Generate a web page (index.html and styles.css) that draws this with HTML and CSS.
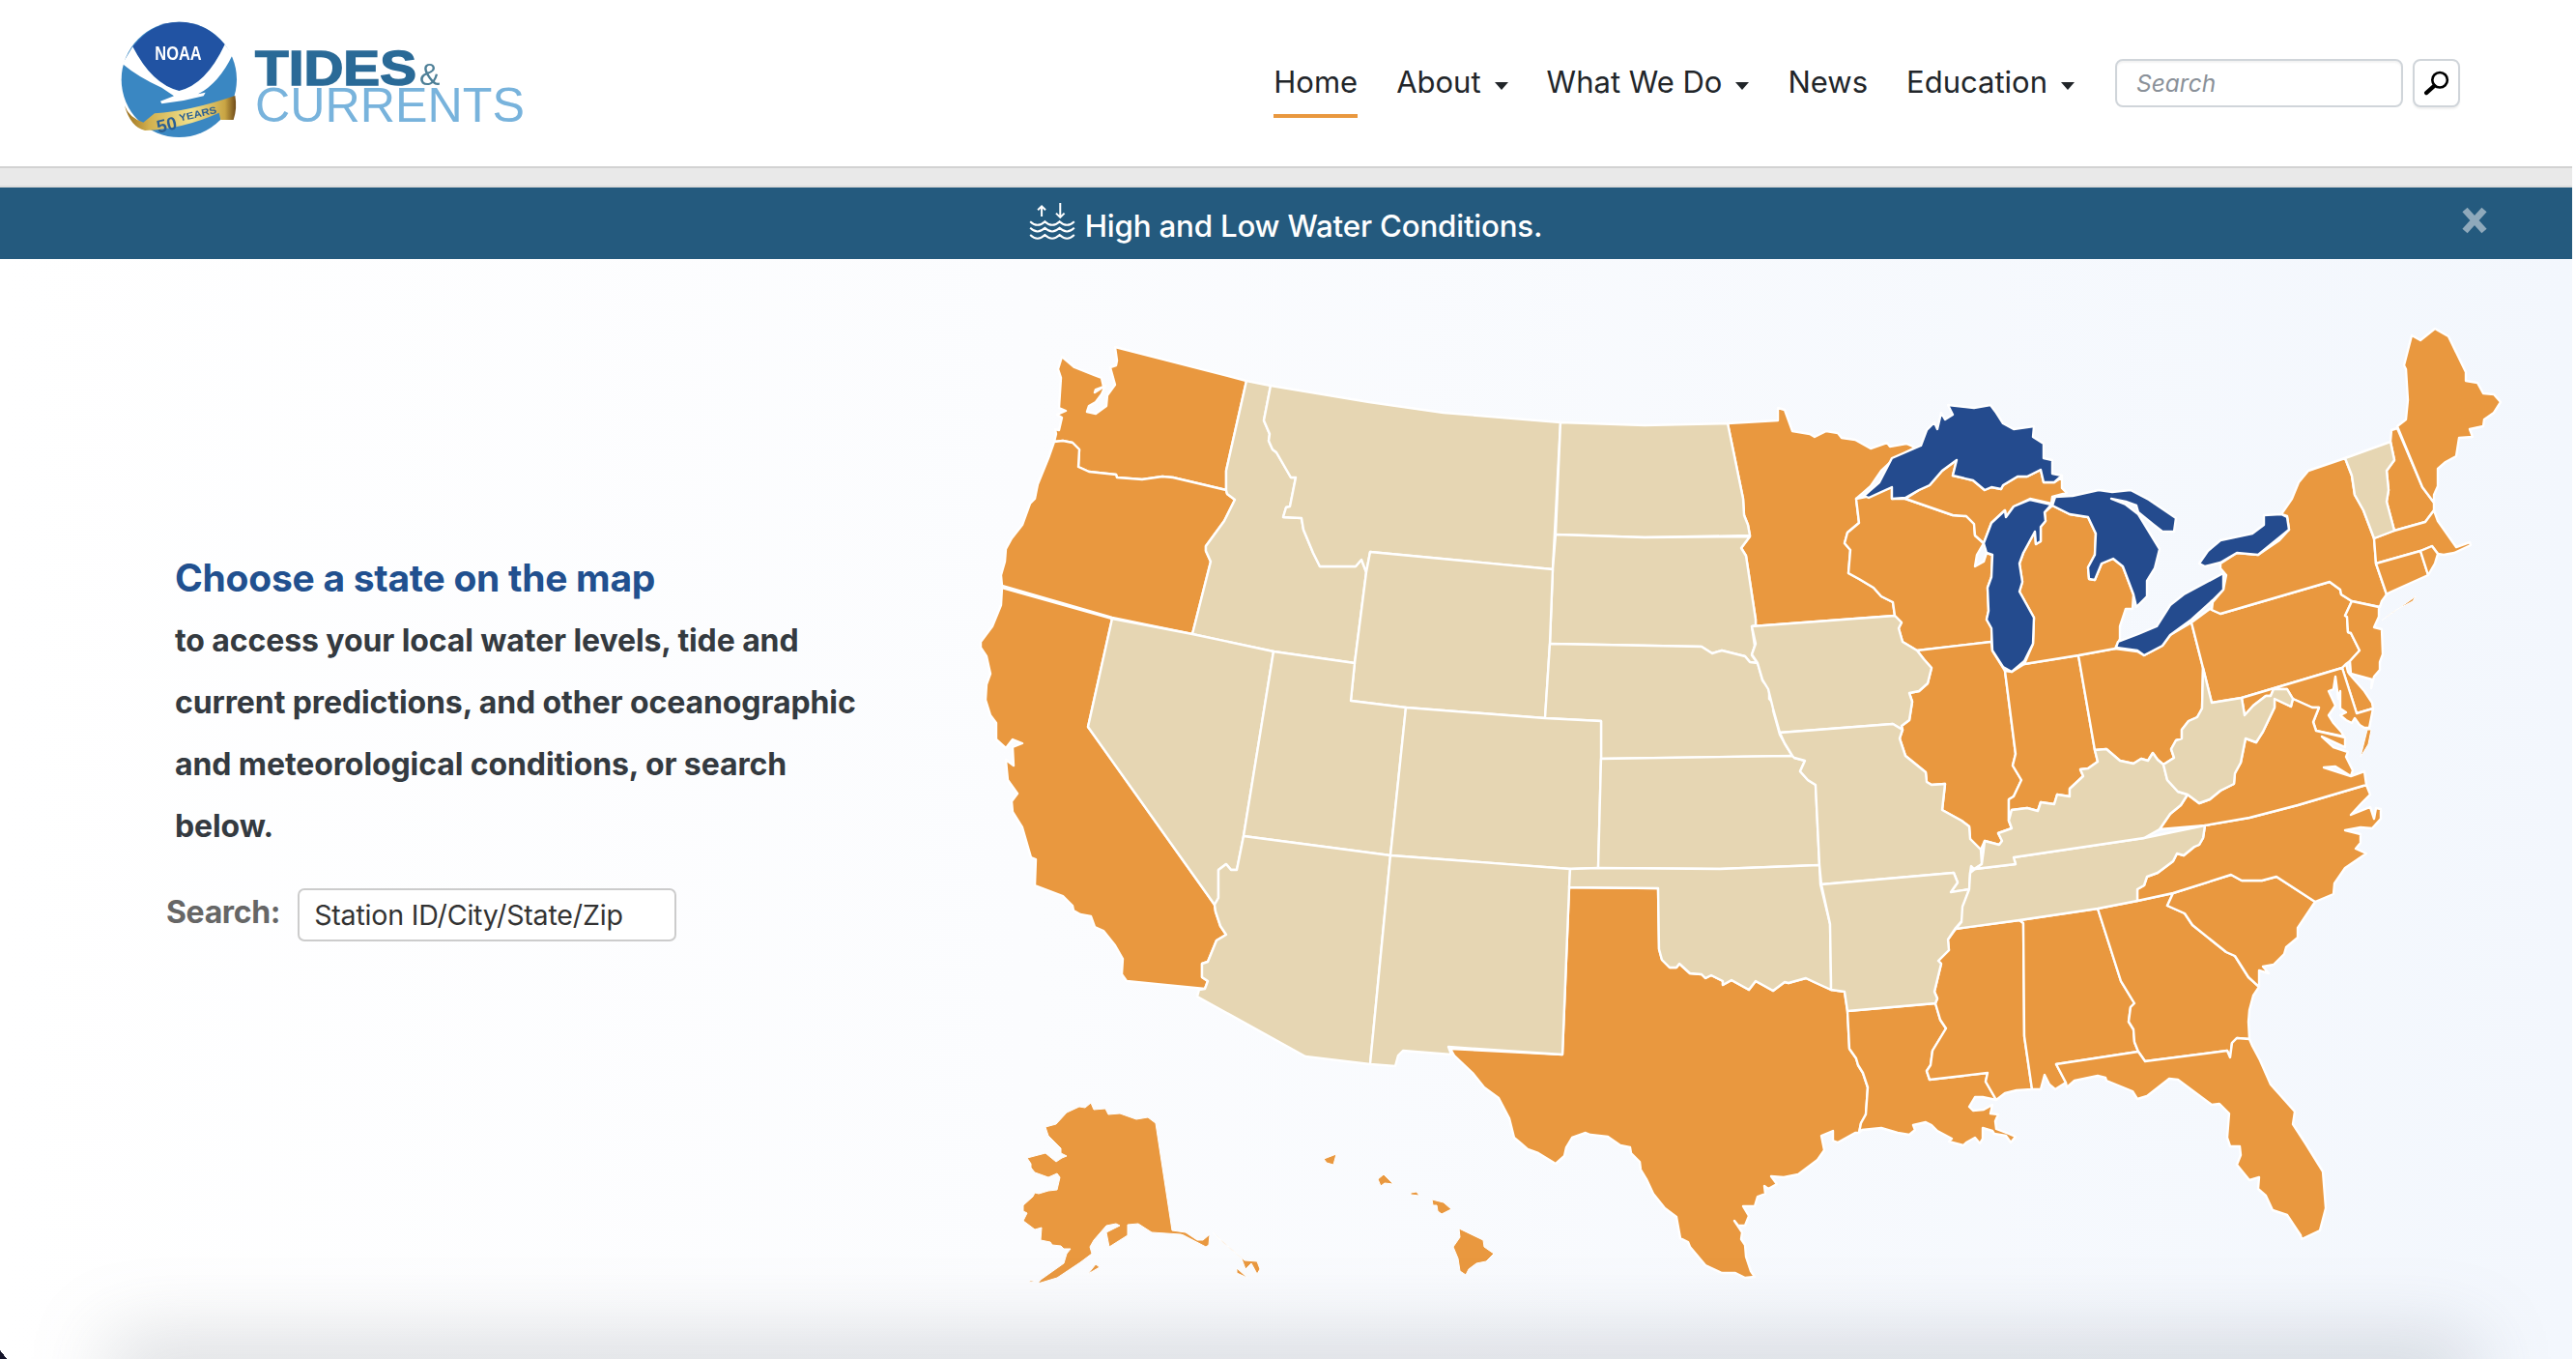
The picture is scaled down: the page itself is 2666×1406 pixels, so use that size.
FILE: index.html
```html
<!DOCTYPE html>
<html lang="en">
<head>
<meta charset="utf-8">
<title>Tides &amp; Currents</title>
<link rel="stylesheet" href="styles.css">
</head>
<body>
<div class="page">
  <header class="topbar">
    <a class="logo" href="#">
      <svg class="logo-art" viewBox="120 20 430 125" width="430" height="125">
        <defs>
          <linearGradient id="gold" x1="0" y1="0" x2="1" y2="0">
            <stop offset="0" stop-color="#9a6f1e"/><stop offset=".22" stop-color="#d2b04e"/>
            <stop offset=".6" stop-color="#f0e08c"/><stop offset=".9" stop-color="#c9a544"/><stop offset="1" stop-color="#6e4a18"/>
          </linearGradient>
        </defs>
        <g transform="translate(80 0) scale(.33333)">
          <circle cx="316" cy="247" r="179" fill="#3a87c2"/>
          <path d="M172 145Q232 68 316 68Q400 68 458 138Q400 262 316 282Q232 262 172 145Z" fill="#2153a3"/>
          <path d="M172 145Q232 262 316 282Q400 262 458 138L482 170Q440 258 375 292L398 287L392 298L330 312L262 322L258 314L300 298L262 272Q190 240 140 198Z" fill="#fff"/>
          <text class="logo-noaa" x="241" y="185" textLength="145" lengthAdjust="spacingAndGlyphs">NOAA</text>
          <path d="M147 328Q160 365 205 380L240 352Q350 345 490 297Q497 335 485 372L445 372L440 350Q330 400 210 405Q165 395 147 328Z" fill="url(#gold)"/>
          <g transform="rotate(-13 340 370)">
            <text class="logo-fifty" x="244" y="392">50</text>
            <text class="logo-years" x="318" y="372" textLength="118" lengthAdjust="spacingAndGlyphs">YEARS</text>
          </g>
        </g>
        <text class="logo-tides" x="264" y="88" textLength="167" lengthAdjust="spacingAndGlyphs">TIDES</text>
        <text class="logo-amp" x="434" y="88">&amp;</text>
        <text class="logo-currents" x="264" y="126" textLength="279" lengthAdjust="spacingAndGlyphs">CURRENTS</text>
      </svg>
    </a>
    <nav class="nav">
      <a class="nav-link active" href="#">Home</a>
      <a class="nav-link caret" href="#">About</a>
      <a class="nav-link caret" href="#">What We Do</a>
      <a class="nav-link" href="#">News</a>
      <a class="nav-link caret" href="#">Education</a>
    </nav>
    <form class="top-search">
      <input class="top-input" type="text" placeholder="Search">
      <button class="top-btn" type="button" aria-label="Search">
        <svg viewBox="85 100 85 80" width="28" height="26">
          <circle cx="137" cy="130" r="24" fill="none" stroke="#000" stroke-width="8"/>
          <path d="M119 149L94 171" stroke="#000" stroke-width="13" stroke-linecap="round"/>
        </svg>
      </button>
    </form>
  </header>
  <div class="stripe"></div>
  <div class="banner">
    <svg class="water" viewBox="70 55 150 130" width="50" height="43">
      <g fill="none" stroke="#fff" stroke-width="6">
        <path d="M112 100V68M100 80L112 68L124 80"/>
        <path d="M170 58V102M157 90L170 103L183 90"/>
        <path d="M76 116q23 22 46 0q23 22 46 0q23 22 46 0"/>
        <path d="M76 136q23 22 46 0q23 22 46 0q23 22 46 0"/>
        <path d="M76 158q23 22 46 0q23 22 46 0q23 22 46 0"/>
      </g>
    </svg>
    <span class="banner-text">High and Low Water Conditions.</span>
    <button class="banner-close" type="button" aria-label="Close">
      <svg viewBox="0 0 26 28" width="26" height="28"><path d="M3 3L23 25M23 3L3 25" stroke="#8fa9bb" stroke-width="7"/></svg>
    </button>
  </div>
  <main class="hero">
    <section class="intro">
      <h1 class="intro-title">Choose a state on the map</h1>
      <p class="intro-text">to access your local water levels, tide and current predictions, and other oceanographic and meteorological conditions, or search below.</p>
      <form class="station-form">
        <label class="station-label" for="station">Search:</label>
        <input class="station-input" id="station" type="text" placeholder="Station ID/City/State/Zip">
      </form>
    </section>
    <svg class="map" viewBox="1000 320 1620 1050" width="1620" height="1050">
      <g class="or">
        <polygon points="1154,359 1290,394 1269,487 1269,507 1214,494 1203,493 1182,496 1156,494 1155,491 1127,488 1116,483 1117,465 1110,458 1100,456 1091,457 1093,449 1092,444 1096,445 1099,432 1094,429 1103,425 1096,422 1098,391 1095,382 1099,369 1112,380 1132,388 1140,391 1142,400 1134,403 1133,406 1144,399 1140,408 1134,416 1127,420 1125,426 1134,428 1145,420 1146,409 1154,398 1149,380 1155,378 1156,373"/>
        <polygon points="1091,457 1100,456 1110,458 1117,465 1116,483 1127,488 1155,491 1156,494 1182,496 1203,493 1214,494 1269,507 1270,511 1278,517 1267,539 1248,565 1248,570 1253,581 1234,656 1151,639 1037,606 1036,595 1040,581 1041,568 1047,557 1058,543 1066,521 1071,516 1074,501 1085,474"/>
        <polygon points="1037,608 1151,640 1126,752 1257,936 1258,943 1263,958 1269,967 1259,973 1250,995 1244,997 1244,1011 1250,1015 1247,1023 1166,1015 1161,1008 1162,992 1154,978 1142,963 1133,959 1129,948 1118,946 1111,942 1110,937 1100,927 1071,916 1072,889 1067,887 1058,856 1048,840 1047,829 1053,821 1043,807 1041,786 1049,792 1048,773 1058,769 1048,765 1041,774 1031,765 1031,748 1025,740 1020,724 1021,708 1025,697 1021,679 1015,670 1015,664 1027,648 1036,626"/>
        <polygon points="1624,918 1716,919 1717,982 1720,993 1728,1001 1735,1001 1738,997 1749,1007 1761,1008 1765,1012 1771,1009 1783,1015 1783,1019 1792,1014 1810,1024 1817,1015 1835,1025 1847,1016 1851,1017 1869,1012 1884,1019 1895,1024 1909,1026 1912,1046 1914,1085 1921,1095 1923,1102 1928,1110 1933,1125 1931,1153 1926,1162 1924,1172 1920,1172 1902,1182 1897,1180 1897,1170 1885,1175 1888,1190 1881,1200 1861,1215 1846,1218 1833,1217 1839,1225 1830,1230 1826,1227 1827,1235 1819,1238 1816,1248 1804,1248 1810,1258 1806,1268 1799,1268 1795,1263 1803,1275 1802,1282 1806,1288 1807,1300 1812,1315 1816,1321 1806,1322 1796,1317 1782,1317 1765,1309 1749,1290 1747,1285 1739,1281 1735,1259 1723,1250 1711,1235 1704,1220 1698,1210 1697,1202 1688,1193 1687,1187 1677,1185 1664,1176 1646,1174 1641,1172 1627,1177 1621,1187 1619,1196 1610,1204 1592,1193 1581,1189 1573,1182 1567,1177 1562,1157 1551,1136 1536,1125 1524,1110 1505,1092 1501,1085 1617,1091"/>
        <polygon points="1788,438 1840,435 1840,422 1847,424 1855,446 1873,449 1878,452 1890,446 1902,448 1906,453 1920,455 1936,464 1953,458 1956,462 1973,459 1982,463 1961,474 1947,487 1936,503 1921,516 1924,541 1912,551 1909,562 1915,569 1913,593 1924,599 1939,608 1947,617 1959,623 1961,637 1813,648 1817,647 1817,641 1807,575 1802,567 1811,555 1811,554 1809,543 1805,533 1804,516 1795,472"/>
        <polygon points="1921,516 1931,514 1958,504 1958,516 1972,516 2021,533 2035,534 2043,542 2044,554 2053,562 2046,574 2044,586 2053,581 2056,572 2062,574 2061,597 2057,608 2058,632 2056,641 2062,651 2061,664 1984,673 1969,664 1965,650 1968,644 1961,637 1959,623 1947,617 1939,608 1924,599 1913,593 1915,569 1909,562 1912,551 1924,541"/>
        <polygon points="1984,673 2061,664 2062,673 2075,694 2086,780 2083,792 2092,807 2084,824 2079,827 2079,849 2082,857 2068,862 2072,870 2069,874 2054,870 2050,879 2039,868 2038,855 2030,849 2010,838 2013,811 1999,812 1994,809 1993,799 1972,782 1966,764 1969,755 1968,751 1976,745 1979,726 1976,717 1986,715 1995,707 1999,691 1991,682"/>
        <polygon points="1912,1046 2003,1038 2008,1055 2014,1064 2000,1087 1998,1102 1994,1108 1997,1117 2057,1110 2055,1119 2066,1138 2052,1135 2044,1135 2038,1145 2042,1149 2053,1148 2062,1143 2060,1152 2068,1153 2065,1160 2066,1168 2079,1173 2086,1176 2081,1182 2076,1175 2064,1173 2062,1170 2052,1167 2052,1178 2049,1183 2044,1177 2035,1182 2032,1185 2017,1181 2020,1178 2005,1170 1999,1164 1993,1161 1980,1164 1982,1169 1976,1174 1964,1172 1947,1167 1927,1169 1924,1172 1926,1162 1931,1153 1933,1125 1928,1110 1923,1102 1921,1095 1914,1085"/>
        <polygon points="2024,961 2090,952 2094,955 2095,1072 2103,1127 2087,1128 2075,1131 2066,1138 2055,1119 2057,1110 1997,1117 1994,1108 1998,1102 2000,1087 2014,1064 2008,1055 2003,1038 2005,1033 2002,1026 2009,997 2006,994 2017,983 2016,972"/>
        <polygon points="2090,952 2171,940 2195,1015 2209,1038 2205,1042 2203,1057 2208,1065 2209,1078 2213,1088 2128,1101 2138,1120 2127,1127 2121,1122 2116,1112 2112,1127 2106,1127 2103,1127 2095,1072 2094,955"/>
        <polygon points="2171,940 2212,932 2249,924 2243,937 2261,945 2269,957 2304,985 2313,989 2327,1011 2338,1021 2332,1030 2328,1045 2327,1057 2328,1075 2315,1074 2310,1079 2308,1094 2305,1087 2220,1098 2213,1088 2209,1078 2208,1065 2203,1057 2205,1042 2209,1038 2195,1015"/>
        <polygon points="2128,1101 2213,1088 2220,1098 2305,1087 2308,1094 2310,1079 2315,1074 2328,1075 2331,1082 2339,1097 2350,1122 2375,1150 2373,1163 2386,1183 2404,1212 2407,1250 2401,1273 2382,1282 2381,1278 2367,1257 2352,1252 2345,1237 2337,1230 2338,1218 2328,1221 2315,1205 2319,1195 2318,1186 2308,1186 2305,1177 2307,1152 2297,1142 2289,1143 2254,1117 2245,1116 2222,1134 2212,1137 2207,1129 2180,1118 2179,1115 2171,1113 2147,1118 2139,1125 2138,1120"/>
        <polygon points="2249,924 2309,905 2320,911 2341,911 2356,907 2396,933 2378,960 2378,970 2366,980 2364,987 2353,998 2342,1000 2348,1007 2338,1004 2338,1021 2327,1011 2313,989 2304,985 2269,957 2261,945 2243,937"/>
        <polygon points="2282,854 2328,846 2378,833 2449,812 2453,822 2445,830 2433,843 2453,835 2457,847 2459,836 2464,837 2464,847 2455,857 2443,856 2427,859 2443,863 2443,872 2438,878 2449,883 2427,898 2416,914 2415,925 2396,933 2356,907 2341,911 2320,911 2309,905 2249,924 2212,932 2212,920 2219,916 2222,907 2233,903 2249,891 2253,883 2260,885 2271,876 2276,874 2280,867"/>
        <polygon points="2075,694 2082,695 2095,687 2151,678 2168,776 2171,788 2161,795 2153,796 2156,803 2142,816 2142,824 2129,822 2126,832 2112,830 2109,839 2098,836 2082,838 2079,849 2079,827 2084,824 2092,807 2083,792 2086,780"/>
        <polygon points="2151,678 2189,671 2212,674 2219,678 2238,668 2246,657 2268,644 2280,691 2279,733 2274,742 2265,746 2258,755 2258,764 2252,766 2247,775 2250,784 2239,791 2233,786 2228,779 2223,787 2216,785 2208,790 2194,787 2180,775 2168,776"/>
        <polygon points="1972,516 1986,507 1997,502 2010,487 2025,476 2021,492 2042,497 2054,507 2061,504 2071,506 2073,502 2088,493 2098,493 2112,486 2115,499 2126,499 2134,494 2134,505 2139,510 2124,514 2123,521 2101,516 2084,524 2076,535 2075,528 2061,541 2053,562 2044,554 2043,542 2035,534 2021,533"/>
        <polygon points="2124,523 2142,532 2161,535 2169,552 2168,574 2161,587 2162,599 2168,600 2175,583 2187,578 2197,586 2208,615 2207,630 2200,630 2194,648 2194,661 2189,671 2151,678 2095,687 2104,666 2105,639 2090,612 2093,602 2090,583 2094,572 2106,550 2107,563 2112,560 2112,545 2117,539 2116,530"/>
        <polygon points="2268,644 2287,630 2298,635 2411,602 2422,610 2423,615 2434,622 2427,637 2429,638 2430,654 2433,655 2442,673 2432,684 2428,687 2424,691 2320,722 2289,727 2280,691"/>
        <polygon points="2427,474 2434,492 2437,512 2446,528 2457,557 2459,583 2470,615 2465,622 2463,628 2434,622 2423,615 2422,610 2411,602 2298,635 2289,631 2290,623 2301,610 2304,595 2298,588 2298,583 2315,572 2337,574 2359,559 2369,548 2367,534 2361,532 2372,516 2379,499 2389,487"/>
        <polygon class="thin" points="2465,642 2500,617 2497,622 2478,632 2470,638"/>
        <polygon points="2434,622 2462,628 2462,638 2457,649 2465,651 2466,677 2463,685 2463,693 2457,700 2454,712 2455,703 2433,697 2432,684 2442,673 2433,655 2430,654 2429,638 2427,637"/>
        <polygon points="2424,691 2428,687 2430,695 2432,698 2447,715 2455,727 2456,733 2439,738"/>
        <polygon points="2320,722 2424,691 2439,738 2456,733 2452,753 2447,753 2442,750 2437,743 2434,748 2428,745 2422,740 2428,737 2422,733 2422,715 2420,723 2417,700 2415,713 2410,715 2417,730 2410,740 2415,748 2423,757 2426,762 2397,756 2394,747 2396,742 2400,732 2393,732 2373,723 2367,713 2353,713 2350,720 2345,720 2332,730 2323,740"/>
        <polygon points="2354,723 2371,731 2373,723 2393,732 2400,732 2396,742 2394,747 2397,756 2427,763 2427,773 2403,762 2415,773 2430,778 2428,783 2435,797 2433,803 2417,793 2405,794 2433,803 2447,798 2449,812 2378,833 2328,846 2282,854 2235,858 2246,842 2257,833 2264,822 2276,831 2287,827 2298,818 2312,811 2313,800 2319,789 2324,764 2335,768 2342,757 2354,732"/>
        <polygon class="thin" points="2450,755 2443,783 2451,770 2454,755"/>
        <polygon points="2474,457 2475,445 2481,443 2507,504 2519,520 2519,528 2510,540 2478,549 2470,519 2472,507 2470,487 2478,476"/>
        <polygon points="2481,441 2490,434 2492,414 2490,382 2488,378 2496,347 2505,352 2520,340 2534,348 2552,385 2552,394 2564,396 2570,407 2581,408 2588,416 2581,427 2571,434 2570,441 2556,444 2559,452 2545,453 2542,472 2531,478 2523,485 2523,503 2519,512 2519,520 2507,504"/>
        <polygon points="2457,557 2478,549 2510,540 2519,528 2523,539 2542,566 2556,561 2557,564 2540,572 2529,574 2523,573 2517,565 2505,570 2459,583"/>
        <polygon points="2459,583 2505,570 2513,595 2473,613 2470,615"/>
        <polygon points="2505,570 2517,565 2523,573 2520,583 2513,595"/>
        <polygon class="thin" points="1129,1141 1132,1148 1144,1147 1147,1153 1159,1152 1176,1158 1188,1156 1196,1162 1213,1273 1227,1275 1239,1283 1245,1283 1252,1277 1251,1288 1248,1290 1225,1278 1222,1277 1192,1275 1178,1266 1167,1267 1167,1278 1148,1290 1145,1275 1159,1268 1155,1266 1145,1268 1132,1283 1128,1290 1130,1297 1118,1306 1094,1322 1074,1328 1077,1324 1101,1307 1104,1297 1108,1292 1101,1292 1098,1289 1089,1288 1087,1285 1077,1283 1078,1270 1071,1272 1059,1263 1063,1255 1059,1253 1059,1247 1069,1238 1071,1234 1075,1235 1085,1232 1094,1231 1097,1218 1094,1214 1085,1218 1071,1213 1067,1208 1067,1204 1063,1198 1082,1193 1093,1202 1099,1198 1104,1196 1098,1193 1098,1188 1085,1175 1082,1166 1093,1163 1104,1151 1117,1145 1123,1146"/>
        <polygon class="thin" points="1255,1275 1288,1304 1301,1305 1304,1313 1301,1318 1295,1307 1289,1313 1285,1302 1263,1283"/>
        <polygon class="thin" points="1280,1312 1291,1322 1280,1317"/>
        <polygon class="thin" points="1126,1318 1134,1308 1138,1311"/>
        <polygon class="thin" points="1066,1325 1072,1325 1065,1327"/>
        <polygon class="thin" points="1370,1199 1383,1194 1380,1205 1373,1203"/>
        <polygon class="thin" points="1432,1215 1442,1225 1433,1224 1429,1227 1426,1220"/>
        <polygon class="thin" points="1460,1234 1466,1233 1469,1237 1460,1236"/>
        <polygon class="thin" points="1482,1241 1494,1244 1502,1251 1492,1256 1488,1253 1487,1247 1483,1247"/>
        <polygon class="thin" points="1510,1271 1535,1283 1536,1290 1546,1297 1538,1305 1528,1307 1520,1313 1517,1319 1511,1315 1509,1302 1504,1290 1511,1280"/>
      </g>
      <g class="tn">
        <polygon points="1290,394 1315,399 1308,435 1314,449 1313,456 1317,465 1321,468 1336,494 1341,494 1335,524 1331,525 1328,535 1347,536 1349,548 1359,572 1366,586 1403,586 1409,579 1414,592 1402,686 1318,674 1234,656 1253,581 1248,570 1248,565 1267,539 1278,517 1270,511 1269,507 1269,487"/>
        <polygon points="1315,399 1417,416 1494,427 1615,437 1607,589 1418,571 1414,592 1409,579 1403,586 1366,586 1359,572 1349,548 1347,536 1328,535 1331,525 1335,524 1341,494 1336,494 1321,468 1317,465 1313,456 1314,449 1308,435"/>
        <polygon points="1615,437 1702,440 1788,438 1795,472 1804,516 1805,533 1809,543 1811,554 1702,556 1610,553"/>
        <polygon points="1610,553 1702,556 1811,555 1802,567 1807,575 1817,641 1817,647 1813,648 1816,668 1813,678 1819,686 1811,685 1806,679 1782,673 1772,676 1761,669 1604,666 1607,589"/>
        <polygon points="1418,571 1607,589 1604,666 1599,743 1455,732 1398,725 1402,686 1414,592"/>
        <polygon points="1604,666 1761,669 1772,676 1782,673 1806,679 1811,685 1819,686 1824,704 1831,713 1831,723 1838,731 1835,735 1842,760 1847,769 1855,782 1657,785 1657,746 1599,743"/>
        <polygon points="1151,640 1234,656 1318,674 1287,865 1280,900 1274,900 1269,894 1261,900 1261,929 1257,936 1126,752"/>
        <polygon points="1318,674 1402,686 1398,725 1455,732 1439,885 1287,865"/>
        <polygon points="1455,732 1599,743 1657,746 1657,785 1654,898 1625,899 1439,885"/>
        <polygon points="1287,865 1439,885 1418,1101 1351,1093 1239,1031 1241,1024 1247,1023 1250,1015 1244,1011 1244,997 1250,995 1259,973 1269,967 1263,958 1258,943 1257,936 1261,929 1261,900 1269,894 1274,900 1280,900"/>
        <polygon points="1439,885 1625,899 1624,918 1617,1091 1499,1083 1502,1091 1452,1087 1447,1092 1444,1103 1418,1101"/>
        <polygon points="1657,785 1855,782 1857,784 1868,787 1863,798 1871,807 1879,812 1883,895 1780,899 1654,898"/>
        <polygon points="1625,899 1654,898 1780,899 1883,895 1884,915 1894,956 1895,1016 1895,1024 1884,1019 1869,1012 1851,1017 1847,1016 1835,1025 1817,1015 1810,1024 1792,1014 1783,1019 1783,1015 1771,1009 1765,1012 1761,1008 1749,1007 1738,997 1735,1001 1728,1001 1720,993 1717,982 1716,919 1624,918"/>
        <polygon points="1813,648 1961,637 1968,644 1965,650 1969,664 1984,673 1991,682 1999,691 1995,707 1986,715 1976,717 1979,726 1976,745 1968,751 1969,755 1959,749 1842,758 1835,733 1830,713 1824,703 1819,686 1813,677 1817,666"/>
        <polygon points="1842,758 1959,749 1969,755 1966,764 1972,782 1993,799 1994,809 1999,812 2013,811 2010,838 2030,849 2038,855 2039,868 2050,879 2051,894 2043,899 2040,896 2039,903 2038,920 2019,923 2026,913 2022,903 1885,915 1883,895 1879,812 1871,807 1863,798 1868,787 1857,784 1855,782 1847,769"/>
        <polygon points="1885,915 2022,903 2026,913 2019,923 2038,920 2032,938 2031,952 2024,960 2016,972 2017,983 2006,994 2009,997 2002,1026 2005,1033 2003,1038 1912,1046 1909,1026 1895,1024 1895,1016 1894,956"/>
        <polygon points="2044,899 2086,894 2084,887 2219,867 2282,854 2280,867 2276,874 2271,876 2260,885 2253,883 2249,891 2233,903 2222,907 2219,916 2212,920 2212,932 2171,940 2090,952 2024,961 2030,954 2031,938 2038,920 2039,903"/>
        <polygon points="2051,894 2053,879 2054,870 2069,874 2072,870 2068,862 2082,857 2079,849 2082,838 2098,836 2109,839 2112,830 2126,832 2129,822 2142,824 2142,816 2156,803 2153,796 2161,795 2171,788 2168,776 2180,775 2194,787 2208,790 2216,785 2223,787 2228,779 2233,786 2239,791 2243,807 2254,819 2264,822 2257,833 2246,842 2235,858 2219,867 2084,887 2086,894 2044,899"/>
        <polygon points="2280,691 2289,727 2320,722 2323,740 2332,730 2345,720 2350,720 2353,713 2367,713 2373,723 2371,731 2354,723 2354,732 2342,757 2335,768 2324,764 2319,789 2313,800 2312,811 2298,818 2287,827 2276,831 2264,822 2254,819 2243,807 2239,791 2250,784 2247,775 2252,766 2258,764 2258,755 2265,746 2274,742 2279,733"/>
        <polygon points="2427,474 2474,457 2478,476 2470,487 2472,507 2470,519 2478,549 2457,557 2446,528 2437,512 2434,492"/>
      </g>
      <g class="lk">
        <polygon points="1929,513 1945,499 1958,474 1988,461 1994,445 2002,437 2005,444 2009,427 2013,434 2021,429 2016,419 2043,422 2060,419 2066,427 2073,438 2084,444 2105,441 2104,452 2115,459 2115,474 2124,476 2124,490 2134,492 2126,499 2115,499 2112,486 2098,493 2088,493 2073,502 2071,506 2061,504 2054,507 2042,497 2021,492 2025,476 2010,487 1997,502 1986,507 1972,515 1958,516 1958,504 1934,515"/>
        <polygon points="2084,524 2101,517 2123,522 2116,530 2117,539 2112,545 2112,560 2107,563 2106,550 2094,572 2090,583 2093,602 2090,612 2105,639 2104,666 2095,684 2082,695 2073,690 2062,673 2061,650 2056,641 2058,632 2057,608 2061,597 2062,574 2056,572 2053,562 2061,541 2075,528 2076,535"/>
        <polygon points="2127,514 2145,513 2172,507 2186,509 2205,507 2224,517 2252,536 2250,550 2238,550 2229,543 2213,530 2211,523 2200,519 2185,516 2200,522 2213,532 2235,568 2230,588 2222,601 2222,617 2211,628 2208,615 2197,586 2187,578 2175,583 2168,600 2162,599 2161,587 2168,574 2169,552 2161,535 2142,532 2124,523"/>
        <polygon points="2190,670 2192,664 2213,656 2232,648 2246,626 2260,615 2301,593 2301,610 2290,621 2268,641 2246,657 2238,668 2219,678 2212,673"/>
        <polygon points="2276,583 2285,570 2298,559 2331,552 2343,543 2343,533 2361,532 2367,535 2369,548 2337,574 2315,572 2298,582 2282,586"/>
      </g>
    </svg>
    <div class="hero-shadow"></div>
    <div class="corner"></div>
  </main>
</div>
</body>
</html>
```

FILE: styles.css
```css
* { box-sizing: border-box; }
html, body { margin: 0; padding: 0; background: #fff; }
body { font-family: Inter, "Liberation Sans", sans-serif; color: #212529; overflow: hidden; }
.page { width: 2662px; height: 1406px; display: flex; flex-direction: column; overflow: hidden; }

.topbar { height: 174px; flex: none; display: flex; align-items: flex-start; padding: 0 116px 0 120px; background: #fff; border-bottom: 2px solid #d2d2d2; }
.logo { display: block; margin-top: 20px; }
.logo-art { display: block; filter: blur(.5px); }
.logo-noaa { font: 700 60px "Liberation Sans", sans-serif; fill: #fff; }
.logo-fifty { font: 700 56px "Liberation Sans", sans-serif; fill: #2a5f93; }
.logo-years { font: 700 30px "Liberation Sans", sans-serif; fill: #2a5f93; }
.logo-tides { font: 700 50px "Liberation Sans", sans-serif; fill: #2a6a97; stroke: #2a6a97; stroke-width: 1.5px; }
.logo-amp { font: 400 32px "Liberation Sans", sans-serif; fill: #4d7f97; }
.logo-currents { font: 400 50px "Liberation Sans", sans-serif; fill: #78b3dc; }

.nav { margin-left: auto; display: flex; gap: 40px; }
.nav-link { display: block; height: 122px; padding-top: 66px; font-size: 31px; line-height: 38px; color: #212529; text-decoration: none; }
.nav-link.active { border-bottom: 4px solid #e9983f; }
.nav-link.caret::after { content: ""; display: inline-block; margin-left: 14px; vertical-align: 3px; border-top: 8px solid #212529; border-left: 7.5px solid transparent; border-right: 7.5px solid transparent; }

.top-search { display: flex; gap: 10px; margin: 61px 0 0 42px; }
.top-input { width: 298px; height: 50px; padding: 0 20px; border: 2px solid #d0d5da; border-radius: 8px; font: italic 400 24.5px Inter, sans-serif; background: #fff; box-shadow: inset 0 2px 2px rgba(0,0,0,.05); outline: 0; }
.top-input::placeholder { color: #8a9199; opacity: 1; }
.top-btn { width: 49px; height: 50px; padding: 0; display: flex; align-items: center; justify-content: center; background: #fff; border: 2px solid #d0d5da; border-radius: 8px; box-shadow: 0 2px 2px rgba(0,0,0,.06); }

.stripe { height: 20px; flex: none; background: #e9e9e9; border-bottom: 2px solid #dcdcdc; }

.banner { height: 74px; flex: none; position: relative; display: flex; align-items: center; justify-content: center; background: #245a7e; color: #fff; padding-left: 4px; }
.water { margin: -2px 9px 0 -6px; }
.banner-text { font-size: 31.3px; font-weight: 500; letter-spacing: -.2px; line-height: 40px; padding-top: 6px; }
.banner-close { position: absolute; left: 2548px; top: 20px; padding: 0; border: 0; background: none; width: 26px; height: 28px; }
.banner-close svg { display: block; }

.hero { flex: 1; position: relative; display: flex; overflow: hidden; background: linear-gradient(90deg, #fff 0%, #fbfcfe 40%, #f3f7fd 100%); }
.intro { width: 1000px; flex: none; padding: 303px 0 0 172px; }
.intro-title { margin: 0 0 0 9px; font-size: 39px; line-height: 54px; font-weight: 700; letter-spacing: -.27px; color: #21508f; }
.intro-text { margin: 6px 0 0 9px; width: 716px; font-size: 32px; line-height: 64px; font-weight: 700; letter-spacing: -.1px; color: #343a40; }
.station-form { display: flex; align-items: flex-start; gap: 18px; margin-top: 32px; }
.station-label { font-size: 32px; line-height: 44px; font-weight: 700; letter-spacing: -.35px; color: #666; margin-top: 3px; }
.station-input { width: 392px; height: 55px; padding: 0 15px; border: 2px solid #ccc; border-radius: 7px; background: #fff; font: 400 28.6px Inter, sans-serif; letter-spacing: -.2px; outline: 0; }
.station-input::placeholder { color: #333; opacity: 1; }

.map { display: block; flex: none; margin-top: 52px; }
.map polygon { stroke: #fff; stroke-width: 2.4px; stroke-linejoin: round; }
.map polygon.thin { stroke-width: 1px; }
.or { fill: #e9983f; }
.tn { fill: #e6d6b3; }
.lk { fill: #244b8e; }

.hero-shadow { position: absolute; left: 130px; right: 120px; bottom: -40px; height: 40px; box-shadow: 0 -4px 80px 18px rgba(120,125,135,.27); pointer-events: none; }
.corner { position: absolute; left: 0; bottom: 0; width: 7px; height: 9px; background: linear-gradient(to top right, #14142a 50%, transparent 52%); }
```
